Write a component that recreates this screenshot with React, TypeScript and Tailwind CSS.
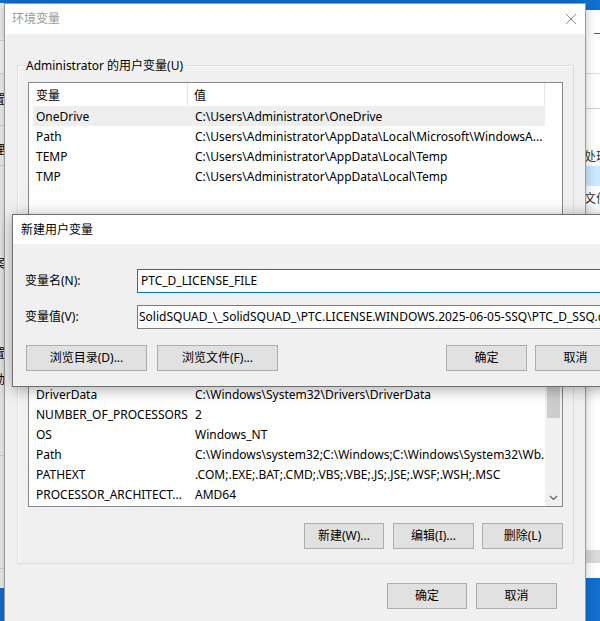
import type { ReactNode } from 'react';

const FONT = "font-['Noto_Sans','Noto_Sans_CJK_SC',sans-serif]";

type Row = { name: string; value: string; selected?: boolean };

const userVars: Row[] = [
  { name: 'OneDrive', value: 'C:\\Users\\Administrator\\OneDrive', selected: true },
  { name: 'Path', value: 'C:\\Users\\Administrator\\AppData\\Local\\Microsoft\\WindowsA...' },
  { name: 'TEMP', value: 'C:\\Users\\Administrator\\AppData\\Local\\Temp' },
  { name: 'TMP', value: 'C:\\Users\\Administrator\\AppData\\Local\\Temp' },
];

const systemVars: Row[] = [
  { name: 'ComSpec', value: 'C:\\Windows\\system32\\cmd.exe' },
  { name: 'DriverData', value: 'C:\\Windows\\System32\\Drivers\\DriverData' },
  { name: 'NUMBER_OF_PROCESSORS', value: '2' },
  { name: 'OS', value: 'Windows_NT' },
  { name: 'Path', value: 'C:\\Windows\\system32;C:\\Windows;C:\\Windows\\System32\\Wb...' },
  { name: 'PATHEXT', value: '.COM;.EXE;.BAT;.CMD;.VBS;.VBE;.JS;.JSE;.WSF;.WSH;.MSC' },
  { name: 'PROCESSOR_ARCHITECT...', value: 'AMD64' },
];

function Btn({ label, className = '' }: { label: string; className?: string }) {
  return (
    <div
      className={`h-[26px] border border-[#adadad] bg-[#e1e1e1] flex items-center justify-center text-[12px] text-black ${className}`}
    >
      {label}
    </div>
  );
}

function GroupBox({ label, className = '', children }: { label: string; className?: string; children: ReactNode }) {
  return (
    <div className={`relative border border-[#dcdcdc] shadow-[inset_1px_1px_0_#ffffff] ${className}`}>
      {label && (
        <span className="absolute -top-[8px] left-[7px] px-[1px] bg-[#f0f0f0] text-[12px] leading-[16px] text-black">
          {label}
        </span>
      )}
      {children}
    </div>
  );
}

function VarRow({ row }: { row: Row }) {
  return (
    <div
      className={`ml-[4px] w-[512px] h-[20px] pt-[2px] flex items-center text-[12px] text-black ${row.selected ? 'bg-[#eeeeee]' : ''}`}
    >
      <div className="w-[155px] pl-[3px] whitespace-nowrap overflow-hidden">{row.name}</div>
      <div className="flex-1 pl-[7px] whitespace-nowrap overflow-hidden">{row.value}</div>
    </div>
  );
}

function ListHeader() {
  return (
    <div className="h-[23px] flex items-center text-[12px] text-black">
      <div className="w-[159px] h-full pl-[7px] pt-[2px] flex items-center border-r border-[#e5e5e5]">变量</div>
      <div className="w-[357px] h-full pl-[6px] pt-[2px] flex items-center border-r border-[#e5e5e5]">值</div>
    </div>
  );
}

function Scrollbar() {
  return (
    <div className="w-[17px] bg-[#f0f0f0] flex flex-col">
      <div className="h-[17px] flex items-center justify-center">
        <svg width="9" height="6" viewBox="0 0 9 6">
          <polyline points="1,5 4.5,1.5 8,5" fill="none" stroke="#606060" strokeWidth="1.2" />
        </svg>
      </div>
      <div className="flex-1 px-[2px] pt-[4px]">
        <div className="h-[56px] bg-[#cdcdcd]" />
      </div>
      <div className="h-[17px] flex items-center justify-center">
        <svg width="9" height="6" viewBox="0 0 9 6">
          <polyline points="1,1 4.5,4.5 8,1" fill="none" stroke="#606060" strokeWidth="1.2" />
        </svg>
      </div>
    </div>
  );
}

function BackgroundWindows() {
  return (
    <>
      {/* window behind, left edge */}
      <div className="absolute left-[-60px] top-[3px] w-[70px] h-[585px] bg-[#f0f0f0] border-r border-[#cfcfcf] overflow-hidden">
        <div className="absolute left-0 right-0 top-[37px] h-[34px] bg-[#fafafa] border-y border-[#dadada]" />
        <div className="absolute left-0 right-0 top-[122px] h-px bg-[#d5d5d5]" />
        <div className="absolute left-0 right-0 top-[162px] h-px bg-[#d5d5d5]" />
        <span className="absolute right-[4px] top-[88px] text-[12px] text-black">设置</span>
        <span className="absolute right-[4px] top-[138px] text-[12px] text-black">管理</span>
        <span className="absolute right-[4px] top-[252px] text-[12px] text-black">方案</span>
        <span className="absolute right-[4px] top-[342px] text-[12px] text-black">设置</span>
        <span className="absolute right-[4px] top-[368px] text-[12px] text-black">启动</span>
        <div className="absolute left-0 right-0 top-[452px] h-px bg-[#d5d5d5]" />
        <div className="absolute left-0 right-0 top-[565px] h-px bg-[#d5d5d5]" />
      </div>
      {/* window behind, right edge */}
      <div className="absolute left-[560px] top-[10px] w-[80px] h-[568px] bg-white overflow-hidden">
        <div className="absolute left-[34px] top-[23px] w-[8px] h-px bg-[#555]" />
        <div className="absolute left-0 right-0 top-[63px] h-px bg-[#e0e0e0]" />
        <div className="absolute left-0 right-0 top-[98px] h-px bg-[#d0d0d0]" />
        <span className="absolute left-[24px] top-[138px] text-[12px] text-[#333]">处理</span>
        <div className="absolute left-0 right-0 top-[156px] h-[20px] bg-[#cce8ff]" />
        <span className="absolute left-[24px] top-[180px] text-[12px] text-[#333]">文件</span>
        <div className="absolute left-0 right-0 top-[540px] h-[13px] bg-[#d9d9d9]" />
      </div>
    </>
  );
}

function NewVariableDialog() {
  return (
    <div className="absolute left-[12px] top-[214px] w-[617px] h-[173px] border border-[#6f6f6f] bg-[#f0f0f0] shadow-[0_2px_14px_rgba(0,0,0,0.35)] flex flex-col">
      <div className="h-[29px] bg-white flex items-center pl-[8px] text-[12px] text-black">新建用户变量</div>
      <div className="flex-1 px-[12px] pt-[25px] flex flex-col">
        <div className="flex items-center h-[24px]">
          <div className="w-[112px] text-[12px] text-black">变量名(N):</div>
          <div className="flex-1 h-[24px] border border-[#0078d7] bg-white flex items-center pl-[3px] text-[12px] text-black whitespace-nowrap overflow-hidden">
            PTC_D_LICENSE_FILE
          </div>
        </div>
        <div className="flex items-center h-[24px] mt-[12px]">
          <div className="w-[112px] text-[12px] text-black">变量值(V):</div>
          <div className="flex-1 h-[24px] border border-[#7a7a7a] bg-white flex items-center pl-[1px] text-[12px] text-black whitespace-nowrap overflow-hidden">
            SolidSQUAD_\_SolidSQUAD_\PTC.LICENSE.WINDOWS.2025-06-05-SSQ\PTC_D_SSQ.dat
          </div>
        </div>
        <div className="flex items-center mt-[16px] pl-[1px]">
          <Btn label="浏览目录(D)..." className="w-[121px]" />
          <Btn label="浏览文件(F)..." className="w-[121px] ml-[10px]" />
          <div className="flex-1" />
          <Btn label="确定" className="w-[81px]" />
          <Btn label="取消" className="w-[81px] ml-[8px]" />
        </div>
      </div>
    </div>
  );
}

export default function App() {
  return (
    <div className={`relative w-[600px] h-[621px] overflow-hidden bg-[#1270d0] ${FONT}`}>
      <BackgroundWindows />

      {/* 环境变量 main window */}
      <div className="absolute left-[4px] top-[3px] w-[582px] h-[640px] border border-[#9a9a9a] bg-[#f0f0f0] shadow-[0_0_10px_rgba(0,0,0,0.25)] flex flex-col">
        <div className="h-[30px] bg-white flex items-center justify-between pl-[7px] pr-[8px]">
          <span className="text-[12px] text-[#9a9a9a]">环境变量</span>
          <svg width="12" height="12" viewBox="0 0 12 12">
            <path d="M1 1 L11 11 M11 1 L1 11" stroke="#8a8a8a" strokeWidth="1" fill="none" />
          </svg>
        </div>

        <div className="flex-1 pl-[12px] pr-[11px] pt-[31px] flex flex-col">
          <GroupBox label="Administrator 的用户变量(U)" className="h-[236px] px-[10px] pt-[16px]">
            <div className="h-[165px] border border-[#828790] bg-white">
              <ListHeader />
              {userVars.map((r) => (
                <VarRow key={r.name} row={r} />
              ))}
            </div>
            <div className="flex justify-end gap-[9px] mt-[14px]">
              <Btn label="新建(N)..." className="w-[81px]" />
              <Btn label="编辑(E)..." className="w-[81px]" />
              <Btn label="删除(D)" className="w-[81px]" />
            </div>
          </GroupBox>

          <GroupBox label="系统变量(S)" className="h-[242px] mt-[21px] px-[10px] pt-[17px]">
            <div className="h-[167px] border border-[#828790] bg-white flex">
              <div className="flex-1 flex flex-col">
                <ListHeader />
                {systemVars.map((r) => (
                  <VarRow key={r.name} row={r} />
                ))}
              </div>
              <Scrollbar />
            </div>
            <div className="flex justify-end mt-[16px]">
              <Btn label="新建(W)..." className="w-[80px]" />
              <Btn label="编辑(I)..." className="w-[81px] ml-[9px]" />
              <Btn label="删除(L)" className="w-[81px] ml-[8px]" />
            </div>
          </GroupBox>

          <div className="flex justify-end mt-[19px] pr-[17px]">
            <Btn label="确定" className="w-[80px]" />
            <Btn label="取消" className="w-[81px] ml-[9px]" />
          </div>
        </div>
      </div>

      <NewVariableDialog />
    </div>
  );
}
